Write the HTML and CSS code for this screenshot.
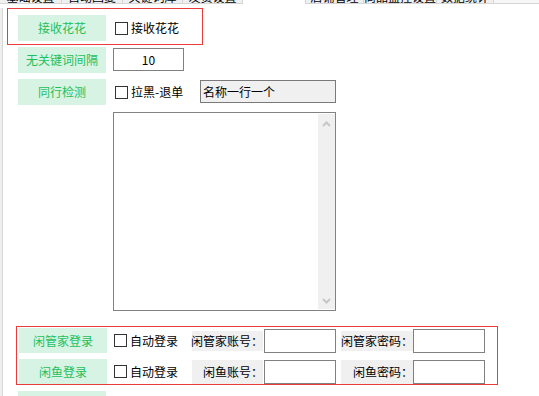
FILE: index.html
```html
<!DOCTYPE html>
<html>
<head>
<meta charset="utf-8"/>
<link rel="stylesheet" href="styles.css">
<title>设置</title>
</head>
<body>
<div class="page">

<div class="tabs">
<div class="tab w1"><span>基础设置</span></div>
<div class="tab w2"><span>自动回复</span></div>
<div class="tab w3"><span>关键词库</span></div>
<div class="tab w4"><span>发货设置</span></div>
<div class="tabgap"></div>
<div class="tab w5"><span>店铺管理</span></div>
<div class="tab w6"><span>商品监控设置</span></div>
<div class="tab w7"><span>数据统计</span></div>
<div class="tab w8"></div>
</div>

<div class="panel">

<div class="redbox hua">
<div class="lbl">接收花花</div>
<label class="chk c1"><i></i>接收花花</label>
</div>

<div class="row r2">
<div class="lbl">无关键词间隔</div>
<div class="inp num">10</div>
</div>

<div class="row r3">
<div class="lbl">同行检测</div>
<label class="chk c3"><i></i>拉黑-退单</label>
<div class="inp ro">名称一行一个</div>
</div>

<div class="memo">
<div class="scroll">
<svg width="9" height="6" viewBox="0 0 9 6"><path d="M1 5 L4.5 1.5 L8 5" fill="none" stroke="#c6c6c6" stroke-width="2"/></svg>
<svg width="9" height="6" viewBox="0 0 9 6"><path d="M1 1 L4.5 4.5 L8 1" fill="none" stroke="#c6c6c6" stroke-width="2"/></svg>
</div>
</div>

<div class="redbox login">
<div class="row la">
<div class="lbl">闲管家登录</div>
<label class="chk c4"><i></i>自动登录</label>
<div class="gl"><span>闲管家账号：</span></div>
<div class="inp acc"></div>
<div class="gl pw"><span>闲管家密码：</span></div>
<div class="inp acc"></div>
</div>
<div class="row lb">
<div class="lbl">闲鱼登录</div>
<label class="chk c4"><i></i>自动登录</label>
<div class="gl"><span>闲鱼账号：</span></div>
<div class="inp acc"></div>
<div class="gl pw"><span>闲鱼密码：</span></div>
<div class="inp acc"></div>
</div>
</div>

<div class="lbl last"></div>

</div>
</div>
</body>
</html>
```
FILE: styles.css
```css
html,body{margin:0;padding:0;background:#fff;}
body{font:12px/1 "Noto Sans CJK SC","Liberation Sans",sans-serif;color:#000;}
.page{width:539px;height:396px;overflow:hidden;}

/** tabs, cut off at the top **/
.tabs{display:flex;height:4px;overflow:hidden;}
.tab{height:3px;overflow:hidden;background:#f0f0f0;border:1px solid #d6d6d6;border-top:0;border-left:0;text-align:center;white-space:nowrap;}
.tab span{display:block;line-height:12px;margin-top:-9px;}
.w1{width:61px;}.w2{width:60px;}.w3{width:59px;}.w4{width:59px;}
.w5{width:57px;border-left:1px solid #d6d6d6;}.w6{width:72px;}.w7{width:56px;}.w8{flex:1;background:#f7f7f7;border-right:0;}
.tabgap{width:62px;}

/** panel **/
.panel{margin-left:2px;border-left:1px solid #d8d8d8;box-shadow:-2px 0 0 #efefef;height:392px;}
.row{display:flex;align-items:flex-start;}
.lbl{width:88px;height:26px;line-height:26px;background:#d6f3e3;color:#1fbf5c;text-align:center;flex:none;}

.chk{display:flex;align-items:center;height:26px;flex:none;white-space:nowrap;}
.chk i{display:block;width:11px;height:11px;border:1px solid #333;margin-right:3px;}

.inp{box-sizing:border-box;border:1px solid #808080;background:#fff;flex:none;}

.redbox{box-sizing:border-box;border:1px solid #ec3b3b;}
.hua{width:196px;height:37px;margin:4px 0 0 4px;padding:6px 0 0 10px;display:flex;align-items:flex-start;}
.c1{margin-left:9px;}

.r2{margin:2px 0 0 15px;}
.num{width:71px;height:23px;line-height:21px;text-align:center;margin:1px 0 0 7px;}

.r3{margin:6px 0 0 15px;}
.c3{margin-left:9px;width:85px;}
.ro{width:136px;height:23px;line-height:21px;padding-left:2px;background:#f0f0f0;margin-top:1px;border-color:#7a7a7a;white-space:nowrap;}

.memo{box-sizing:border-box;width:223px;height:199px;margin:7px 0 0 110px;border:1px solid #828282;display:flex;}
.scroll{width:17px;margin:1px 0 1px auto;background:#f0f0f0;display:flex;flex-direction:column;justify-content:space-between;align-items:center;padding:7px 0 5px;box-sizing:border-box;}
.scroll svg{display:block;}

.login{width:482px;height:59px;margin:15px 0 0 13px;padding:1px 0 0 2px;}
.login .lbl{height:25px;line-height:25px;}
.login .row{align-items:center;height:25px;}
.lb{margin-top:6px;}
.c4{margin-left:7px;width:78px;height:25px;}
.gl{width:71px;background:#f0f0f0;flex:none;white-space:nowrap;display:flex;justify-content:flex-end;}
.la .gl{height:20px;line-height:20px;}
.lb .gl{height:24px;line-height:24px;}
.gl.pw{width:72px;margin-left:5px;}
.acc{width:72px;height:24px;}
.gl + .acc{margin-left:1px;}
.pw + .acc{margin-left:0;}

.last{margin:6px 0 0 15px;}
```
